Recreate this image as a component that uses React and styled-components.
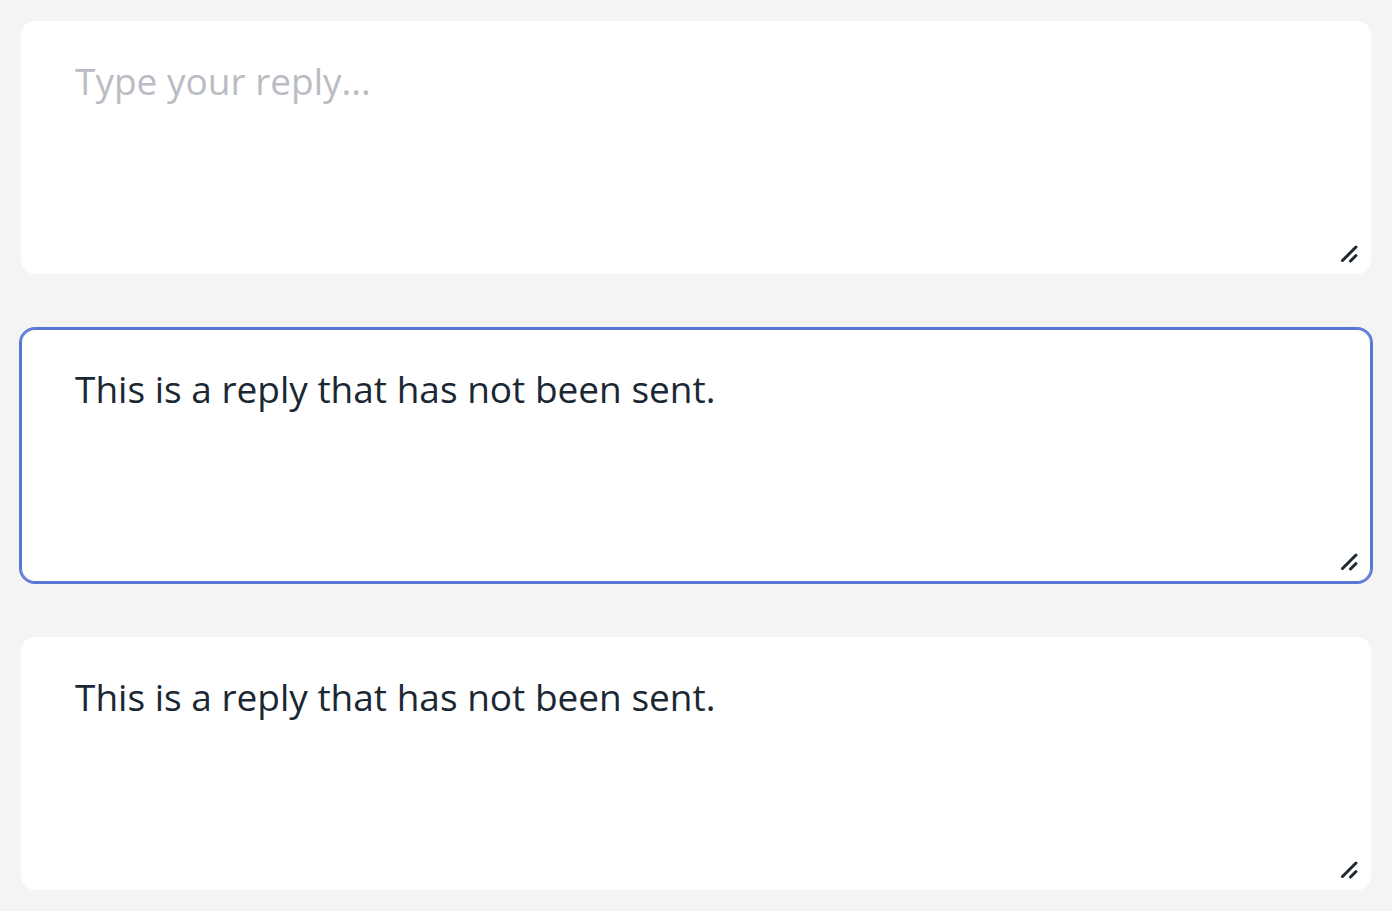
import React from "react";
import styled, { createGlobalStyle } from "styled-components";

const GlobalStyle = createGlobalStyle`
  html, body {
    margin: 0;
    padding: 0;
    background: #f4f4f4;
  }
  * {
    box-sizing: border-box;
  }
`;

const ResizeHandle = () => (
  <Handle width="18" height="18" viewBox="0 0 18 18">
    <line x1="2.5" y1="15.5" x2="16" y2="2" />
    <line x1="10.5" y1="16" x2="16" y2="10.5" />
  </Handle>
);

const ReplyBox = ({ value, focused }) => (
  <Field $focused={focused}>
    <Input
      placeholder="Type your reply..."
      defaultValue={value}
    />
    <ResizeHandle />
  </Field>
);

const App = () => {
  return (
    <Page>
      <GlobalStyle />
      <ReplyBox />
      <ReplyBox value="This is a reply that has not been sent." focused />
      <ReplyBox value="This is a reply that has not been sent." />
    </Page>
  );
};

const Page = styled.div`
  padding: 19px;
  display: flex;
  flex-direction: column;
  gap: 51px;
`;

const Field = styled.div`
  position: relative;
  height: 257px;
  background: #ffffff;
  border: 2px solid ${(p) => (p.$focused ? "#5a77d5" : "#f4f4f4")};
  box-shadow: ${(p) => (p.$focused ? "inset 0 0 0 1px #5a77d5" : "none")};
  border-radius: 16px;
  overflow: hidden;
`;

const Input = styled.textarea`
  display: block;
  width: 100%;
  height: 100%;
  border: 0;
  outline: none;
  resize: none;
  background: transparent;
  padding: 32px 54px;
  font-family: "Open Sans", "Noto Sans", sans-serif;
  font-size: 37px;
  line-height: 1.5;
  color: #1b2834;

  &::placeholder {
    color: #b9bdc3;
  }
`;

const Handle = styled.svg`
  position: absolute;
  right: 13px;
  bottom: 11px;
  stroke: #1f2a33;
  stroke-width: 3;
  stroke-linecap: round;
  pointer-events: none;
`;

export default App;
